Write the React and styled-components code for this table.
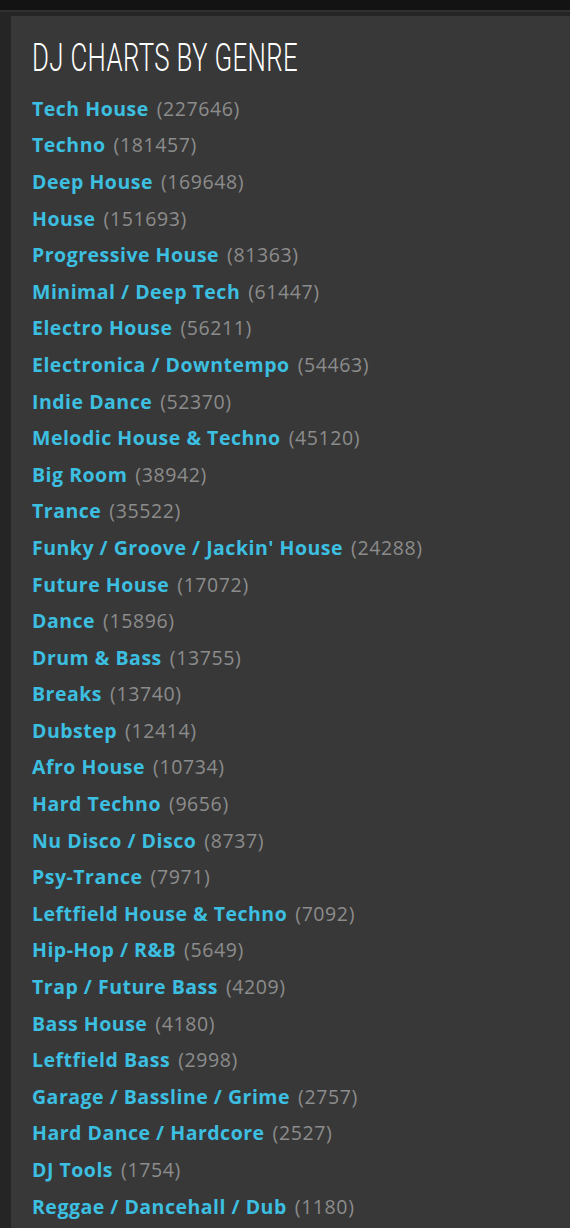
import React from "react";
import styled, { createGlobalStyle } from "styled-components";

const Global = createGlobalStyle`
  html, body { margin: 0; padding: 0; background: #252525; }
  body { font-family: "Open Sans", "Noto Sans", sans-serif; }
`;

const Page = styled.div`
  min-height: 1228px;
  background: #252525;
  display: flex;
  flex-direction: column;
`;

const TopBar = styled.div`
  height: 10px;
  background: #131313;
  border-bottom: 2px solid #303030;
`;

const Body = styled.div`
  display: flex;
  padding: 4px 0 0 11px;
  flex: 1;
`;

const Panel = styled.section`
  flex: 1;
  background: #383838;
  padding: 22px 21px 0 21px;
  min-height: 1212px;
`;

const Title = styled.h2`
  margin: 0 0 12px 0;
  font-family: "Roboto", sans-serif;
  font-weight: 300;
  font-size: 38px;
  line-height: 40px;
  color: #ffffff;
  letter-spacing: 0.5px;
  transform: scaleX(0.68);
  transform-origin: left center;
  white-space: nowrap;
`;

const List = styled.ul`
  list-style: none;
  margin: 0;
  padding: 0;
`;

const Item = styled.li`
  height: 36.6px;
  display: flex;
  align-items: center;
  font-size: 19.5px;
  white-space: nowrap;
`;

const Genre = styled.a`
  color: #3cbfe0;
  font-weight: 700;
  letter-spacing: 0.5px;
  text-decoration: none;
`;

const Count = styled.span`
  color: #8c8c8c;
  font-weight: 400;
  letter-spacing: 0.6px;
  margin-left: 8px;
`;

const genres = [
  ["Tech House", 227646],
  ["Techno", 181457],
  ["Deep House", 169648],
  ["House", 151693],
  ["Progressive House", 81363],
  ["Minimal / Deep Tech", 61447],
  ["Electro House", 56211],
  ["Electronica / Downtempo", 54463],
  ["Indie Dance", 52370],
  ["Melodic House & Techno", 45120],
  ["Big Room", 38942],
  ["Trance", 35522],
  ["Funky / Groove / Jackin' House", 24288],
  ["Future House", 17072],
  ["Dance", 15896],
  ["Drum & Bass", 13755],
  ["Breaks", 13740],
  ["Dubstep", 12414],
  ["Afro House", 10734],
  ["Hard Techno", 9656],
  ["Nu Disco / Disco", 8737],
  ["Psy-Trance", 7971],
  ["Leftfield House & Techno", 7092],
  ["Hip-Hop / R&B", 5649],
  ["Trap / Future Bass", 4209],
  ["Bass House", 4180],
  ["Leftfield Bass", 2998],
  ["Garage / Bassline / Grime", 2757],
  ["Hard Dance / Hardcore", 2527],
  ["DJ Tools", 1754],
  ["Reggae / Dancehall / Dub", 1180],
];

export default function App() {
  return (
    <Page>
      <Global />
      <TopBar />
      <Body>
        <Panel>
          <Title>DJ CHARTS BY GENRE</Title>
          <List>
            {genres.map(([name, count]) => (
              <Item key={name}>
                <Genre href="#">{name}</Genre>
                <Count>({count})</Count>
              </Item>
            ))}
          </List>
        </Panel>
      </Body>
    </Page>
  );
}
